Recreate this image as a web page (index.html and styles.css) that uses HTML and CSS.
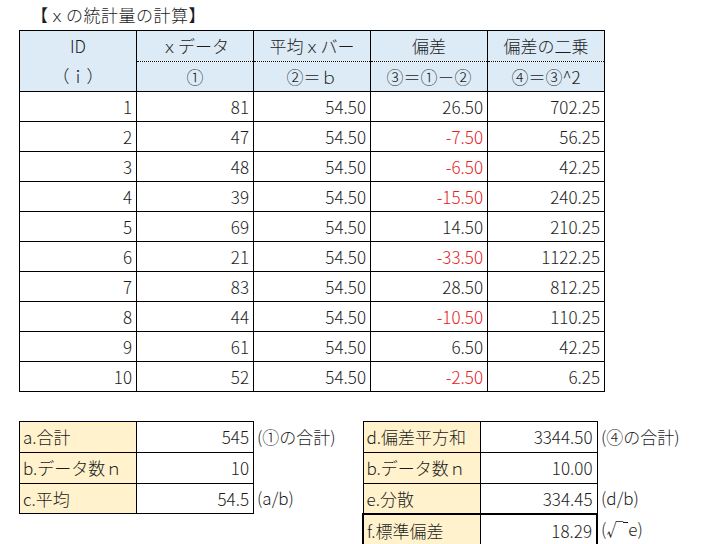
FILE: index.html
```html
<!DOCTYPE html>
<html lang="ja">
<head>
<meta charset="utf-8">
<title>ｘの統計量の計算</title>
<link rel="stylesheet" href="styles.css">
</head>
<body>
<div class="title">【ｘの統計量の計算】</div>
<table class="main">
  <colgroup><col><col><col><col><col></colgroup>
  <thead>
    <tr class="h1">
      <th rowspan="2" class="idh"><div>ID</div><div>（ｉ）</div></th>
      <th class="dot">ｘデータ</th>
      <th class="dot">平均ｘバー</th>
      <th class="dot">偏差</th>
      <th class="dot">偏差の二乗</th>
    </tr>
    <tr class="h2">
      <th>①</th>
      <th>②＝ｂ</th>
      <th>③＝①－②</th>
      <th>④＝③^2</th>
    </tr>
  </thead>
  <tbody>
    <tr><td>1</td><td>81</td><td>54.50</td><td>26.50</td><td>702.25</td></tr>
    <tr><td>2</td><td>47</td><td>54.50</td><td class="neg">-7.50</td><td>56.25</td></tr>
    <tr><td>3</td><td>48</td><td>54.50</td><td class="neg">-6.50</td><td>42.25</td></tr>
    <tr><td>4</td><td>39</td><td>54.50</td><td class="neg">-15.50</td><td>240.25</td></tr>
    <tr><td>5</td><td>69</td><td>54.50</td><td>14.50</td><td>210.25</td></tr>
    <tr><td>6</td><td>21</td><td>54.50</td><td class="neg">-33.50</td><td>1122.25</td></tr>
    <tr><td>7</td><td>83</td><td>54.50</td><td>28.50</td><td>812.25</td></tr>
    <tr><td>8</td><td>44</td><td>54.50</td><td class="neg">-10.50</td><td>110.25</td></tr>
    <tr><td>9</td><td>61</td><td>54.50</td><td>6.50</td><td>42.25</td></tr>
    <tr><td>10</td><td>52</td><td>54.50</td><td class="neg">-2.50</td><td>6.25</td></tr>
  </tbody>
</table>

<div class="summary">
  <div class="group">
    <table class="stat">
      <colgroup><col><col></colgroup>
      <tr><td class="lab">a.合計</td><td class="val">545</td></tr>
      <tr><td class="lab">b.データ数ｎ</td><td class="val">10</td></tr>
      <tr><td class="lab">c.平均</td><td class="val">54.5</td></tr>
    </table>
    <div class="notes">
      <div class="note">(①の合計)</div>
      <div class="note"></div>
      <div class="note">(a/b)</div>
    </div>
  </div>
  <div class="group">
    <table class="stat">
      <colgroup><col><col></colgroup>
      <tr><td class="lab">d.偏差平方和</td><td class="val">3344.50</td></tr>
      <tr><td class="lab">b.データ数ｎ</td><td class="val">10.00</td></tr>
      <tr><td class="lab">e.分散</td><td class="val">334.45</td></tr>
      <tr class="thick"><td class="lab">f.標準偏差</td><td class="val">18.29</td></tr>
    </table>
    <div class="notes">
      <div class="note">(④の合計)</div>
      <div class="note"></div>
      <div class="note">(d/b)</div>
      <div class="note">(√<span class="bar"></span>e)</div>
    </div>
  </div>
</div>
</body>
</html>
```

FILE: styles.css
```css
html, body {
  margin: 0;
  padding: 0;
  background: #ffffff;
}
body {
  font-family: "Noto Sans CJK JP", "Noto Sans", sans-serif;
  font-weight: 300;
  font-size: 17px;
  color: #1c1c1c;
  width: 705px;
  height: 544px;
  overflow: hidden;
}
.title {
  height: 30px;
  line-height: 30px;
  padding-left: 31px;
  font-size: 17px;
  letter-spacing: 0.5px;
}
table {
  border-collapse: collapse;
  table-layout: fixed;
}
.main {
  margin-left: 19px;
  width: 586px;
}
.main col {
  width: 117px;
}
.main th,
.main td {
  border: 1px solid #000;
  height: 29px;
  padding: 0 4px;
  line-height: 29px;
  font-weight: 300;
  white-space: nowrap;
  overflow: hidden;
}
.main th {
  background: #ddebf7;
  text-align: center;
}
.main .h1 th.dot {
  border-bottom: 1px dotted #000;
}
.main .h2 th {
  border-top: 1px dotted #000;
}
.main th.idh {
  line-height: 30px;
}
.main td {
  text-align: right;
}
.main td.neg {
  color: #e52222;
}
.summary {
  display: flex;
  align-items: flex-start;
  margin-top: 29px;
  margin-left: 19px;
}
.group {
  display: flex;
  align-items: flex-start;
  width: 351px;
}
.stat {
  width: 235px;
}
.stat col {
  width: 117px;
}
.stat td {
  border: 1px solid #000;
  height: 29.8px;
  line-height: 29px;
  padding: 0 4px 0 3px;
  white-space: nowrap;
  overflow: hidden;
}
.stat td.lab {
  background: #fff2cc;
  text-align: left;
}
.stat td.val {
  text-align: right;
}
.stat tr.thick td {
  border: 2px solid #000;
}
.stat tr.thick td.lab {
  border-right: 1px solid #000;
}
.stat tr.thick td.val {
  border-left: 1px solid #000;
}
.notes {
  display: flex;
  flex-direction: column;
  padding-left: 3px;
  padding-top: 1px;
}
.note {
  height: 30.7px;
  line-height: 30px;
  white-space: nowrap;
}
.bar {
  display: inline-block;
  width: 5px;
  height: 14px;
  border-top: 1px solid #1c1c1c;
  vertical-align: -1px;
}
```
